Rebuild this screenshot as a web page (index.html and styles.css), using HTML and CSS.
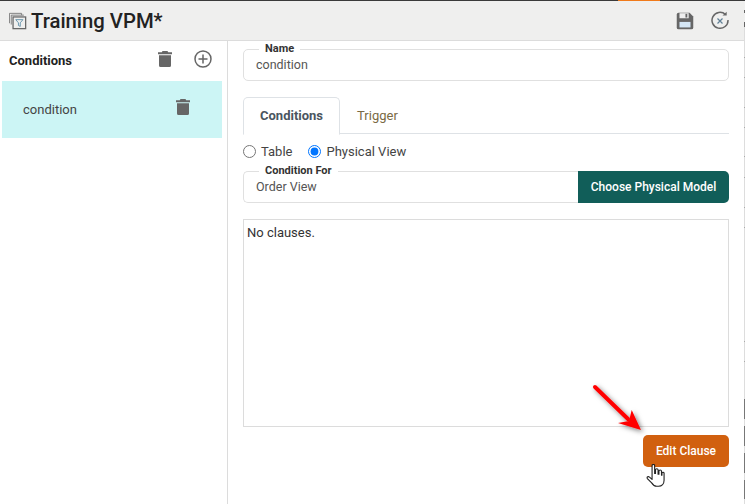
FILE: index.html
```html
<!DOCTYPE html>
<html lang="en">
<head>
    <meta charset="UTF-8">
    <meta name="viewport" content="width=device-width, initial-scale=1.0">
    <title>Training VPM</title>
    <link rel="stylesheet" href="styles.css">
</head>
<body>
    <div class="top-line"><span class="top-accent"></span></div>
    <header class="title-bar">
        <svg class="title-icon" width="18" height="18" viewBox="0 0 20 20" fill="none" stroke="#777">
            <path d="M.5 12.500V1.500h13.500v2"/>
            <path d="M2.500 14V3.500h14"/>
            <rect x="4.500" y="5.500" width="14" height="13" stroke-width="1.400" stroke="#666"/>
            <path d="M7.500 8.500h8l-3 3.500v4l-2-1v-3z" stroke="#5f8fa8"/>
        </svg>
        <h1>Training VPM*</h1>
        <div class="title-actions">
            <svg width="22" height="22" viewBox="0 0 24 24">
                <path fill="#666" d="M17 3H5a2 2 0 0 0-2 2v14a2 2 0 0 0 2 2h14a2 2 0 0 0 2-2V7z"/>
                <rect x="6" y="13" width="12" height="6" fill="#d4e6f5"/>
                <rect x="6" y="3.500" width="10" height="5.500" fill="#eee"/>
                <rect x="12.500" y="4.200" width="2" height="4" fill="#666"/>
            </svg>
            <svg width="20" height="20" viewBox="0 0 20 20" fill="none" stroke="#666">
                <path d="M15.500 3.500A8 8 0 1 0 18 9" stroke-width="1.500"/>
                <path d="M12.500 4.500h4.200V.8z" fill="#666" stroke="none"/>
                <path d="M7.500 7.500l5 5M12.500 7.500l-5 5" stroke="#5f7f95" stroke-width="1.200"/>
            </svg>
        </div>
    </header>

    <div class="main">
        <aside class="sidebar">
            <div class="side-head">
                <span>Conditions</span>
                <svg class="trash" width="14" height="16" viewBox="0 0 14 16"><path d="M4.500 0h5l.7 1.300H14v1.900H0V1.300h3.800zM1 4.200h12V14.500a1.500 1.500 0 0 1-1.500 1.500h-9A1.500 1.500 0 0 1 1 14.500z"/></svg>
                <svg class="add" width="18" height="18" viewBox="0 0 18 18" fill="none" stroke="#666" stroke-width="1.500"><circle cx="9" cy="9" r="8"/><path d="M9 4.500v9M4.500 9h9"/></svg>
            </div>
            <div class="side-item">
                <span>condition</span>
                <svg class="trash" width="14" height="16" viewBox="0 0 14 16"><path d="M4.500 0h5l.7 1.300H14v1.900H0V1.300h3.800zM1 4.200h12V14.500a1.500 1.500 0 0 1-1.500 1.500h-9A1.500 1.500 0 0 1 1 14.500z"/></svg>
            </div>
        </aside>

        <section class="content">
            <fieldset class="field name-field">
                <legend>Name</legend>
                <div class="field-value">condition</div>
            </fieldset>

            <nav class="tabs">
                <div class="tab active">Conditions</div>
                <div class="tab">Trigger</div>
            </nav>

            <div class="radios">
                <label><input type="radio" name="kind"> Table</label>
                <label><input type="radio" name="kind" checked> Physical View</label>
            </div>

            <div class="condition-for">
                <fieldset class="field">
                    <legend>Condition For</legend>
                    <div class="field-value">Order View</div>
                </fieldset>
                <button class="btn-model">Choose Physical Model</button>
            </div>

            <div class="clauses">No clauses.</div>

            <div class="actions">
                <button class="btn-edit">Edit Clause</button>
            </div>
        </section>
    </div>

    <div class="edge-strip"></div>

    <!-- annotation arrow and cursor from the screenshot -->
    <svg class="arrow" width="60" height="56" viewBox="0 0 60 56">
        <defs>
            <filter id="arrowShadow" x="-30%" y="-30%" width="160%" height="160%">
                <feDropShadow dx="2" dy="2" stdDeviation="2.500" flood-color="#000" flood-opacity="0.5"/>
            </filter>
        </defs>
        <g filter="url(#arrowShadow)">
            <path d="M5 6L38 38" stroke="#f00" stroke-width="4" stroke-linecap="round"/>
            <path d="M41.700 29L51 49L28 42L39 40z" fill="#f00"/>
        </g>
    </svg>
    <svg class="cursor" width="19" height="24" viewBox="0 0 22 28">
        <path d="M7 2a1.500 1.500 0 0 1 3 0v9h1V7a1.500 1.500 0 0 1 3 0v5h1V8.500a1.500 1.500 0 0 1 3 0V13h.5V10.500a1.300 1.300 0 0 1 2.500 0V19c0 4-2.500 7-6.500 7h-2c-3 0-4.500-1.500-6-4L1.500 17c-1-1.800 1.200-3 2.500-1.700L7 18z" fill="#fff" stroke="#222" stroke-width="1.300" stroke-linejoin="round"/>
    </svg>
</body>
</html>
```

FILE: styles.css
```css
html, body {
    height: 100%;
}

body {
    margin: 0;
    height: 504px;
    overflow: hidden;
    position: relative;
    background-color: #fff;
    font-family: Roboto, "Liberation Sans", sans-serif;
    color: #333;
}

.top-line {
    height: 1px;
    background-color: #3a3a3a;
    position: relative;
}

.top-accent {
    position: absolute;
    left: 618px;
    top: 0;
    width: 42px;
    height: 1px;
    background-color: #f07a1a;
}

.title-bar {
    height: 39px;
    display: flex;
    align-items: center;
    background-color: #efefee;
    border-bottom: 1px solid #dcdcdc;
    padding: 0 15px 0 9px;
}

.title-icon {
    margin-right: 4px;
    flex-shrink: 0;
}

.title-bar h1 {
    margin: 0;
    font-size: 20.300px;
    font-weight: 500;
    color: #222;
}

.title-actions {
    margin-left: auto;
    display: flex;
    align-items: center;
    gap: 14px;
}

.main {
    display: flex;
    height: 463px;
}

.sidebar {
    width: 228px;
    flex-shrink: 0;
    box-sizing: border-box;
    border-right: 1px solid #dcdcdc;
    padding-left: 2px;
}

.side-head {
    height: 40px;
    box-sizing: border-box;
    padding: 0 0 2px 7px;
    display: flex;
    align-items: center;
    font-size: 13px;
    font-weight: 700;
    color: #222;
}

.side-head span {
    width: 149px;
}

.side-head .trash {
    margin-top: -3px;
}

.side-head .add {
    margin-left: 22px;
    margin-top: -3px;
}

.trash {
    fill: #666;
}

.side-item {
    width: 220px;
    height: 57px;
    display: flex;
    align-items: center;
    background-color: #ccf5f5;
    padding-left: 21px;
    box-sizing: border-box;
    font-size: 13px;
    color: #444;
}

.side-item span {
    width: 153px;
}

.side-item .trash {
    margin-top: -6px;
}

.content {
    flex: 1;
    padding: 0 16px 0 15px;
    min-width: 0;
}

.field {
    margin: 0;
    padding: 0 12px;
    border: 1px solid #e0e0e0;
    border-radius: 5px;
    min-width: 0;
}

.field legend {
    margin-left: 3px;
    padding: 0 6px 2px;
    font-size: 11px;
    font-weight: 700;
    line-height: 11px;
    color: #333;
}

.field-value {
    margin-top: -1px;
    font-size: 12.500px;
    color: #555;
    line-height: 20px;
    height: 25px;
}

.name-field {
    margin-top: 2px;
}

.tabs {
    display: flex;
    margin-top: 16px;
    border-bottom: 1px solid #dee2e6;
    height: 36px;
}

.tab {
    padding: 1px 17px 0;
    font-size: 13px;
    line-height: 36px;
    color: #7a6a45;
}

.tab.active {
    padding: 0 16px;
    font-weight: 700;
    color: #4a5560;
    background-color: #fff;
    border: 1px solid #dee2e6;
    border-bottom: 1px solid #fff;
    border-radius: 5px 5px 0 0;
    height: 36px;
}

.radios {
    display: flex;
    gap: 16px;
    margin-top: 8px;
    font-size: 13px;
    color: #444;
    height: 18px;
    align-items: center;
}

.radios label {
    display: flex;
    align-items: center;
    gap: 5px;
}

.radios input {
    margin: 0;
    width: 13px;
    height: 13px;
}

.condition-for {
    display: flex;
    align-items: flex-end;
    margin-top: 5px;
}

.condition-for .field {
    flex: 1;
    border-right: none;
    border-radius: 5px 0 0 5px;
}

.btn-model {
    width: 151px;
    height: 32px;
    border: none;
    border-radius: 0 5px 5px 0;
    background-color: #115e59;
    color: #fff;
    font-family: inherit;
    font-size: 12px;
    font-weight: 500;
}

.clauses {
    margin-top: 16px;
    height: 208px;
    box-sizing: border-box;
    border: 1px solid #dcdcdc;
    padding: 5px 3px;
    font-size: 13px;
    color: #333;
}

.actions {
    display: flex;
    justify-content: flex-end;
    margin-top: 8px;
}

.btn-edit {
    width: 86px;
    height: 32px;
    border: none;
    border-radius: 5px;
    background-color: #d1600f;
    color: #fff;
    font-family: inherit;
    font-size: 12px;
    font-weight: 500;
}

/* sliver of the window behind, along the right edge */
.edge-strip {
    position: absolute;
    right: 0;
    top: 0;
    width: 1px;
    height: 504px;
    background: linear-gradient(to bottom,
        #3a3a3a 0 1px, #efefee 1px 10px, #666 10px 13px, #efefee 13px 22px, #666 22px 27px,
        #ddd 27px 57px, #aaa 57px 58px, #ddd 58px 77px, #aaa 77px 78px,
        #ddd 78px 107px, #aaa 107px 108px, #ddd 108px 127px, #aaa 127px 128px,
        #ddd 128px 156px, #aaa 156px 157px, #ddd 157px 177px, #aaa 177px 178px,
        #ddd 178px 207px, #aaa 207px 208px, #ddd 208px 227px, #aaa 227px 228px,
        #ddd 228px 341px, #aaa 341px 342px, #ddd 342px 361px, #aaa 361px 362px,
        #ddd 362px 399px, #777 399px 419px, #ddd 419px 426px, #777 426px 446px,
        #ddd 446px 453px, #777 453px 473px, #ddd 473px 480px, #777 480px 499px, #ddd 499px);
}

.arrow {
    position: absolute;
    left: 590px;
    top: 381px;
}

.cursor {
    position: absolute;
    left: 646px;
    top: 464px;
}
```
